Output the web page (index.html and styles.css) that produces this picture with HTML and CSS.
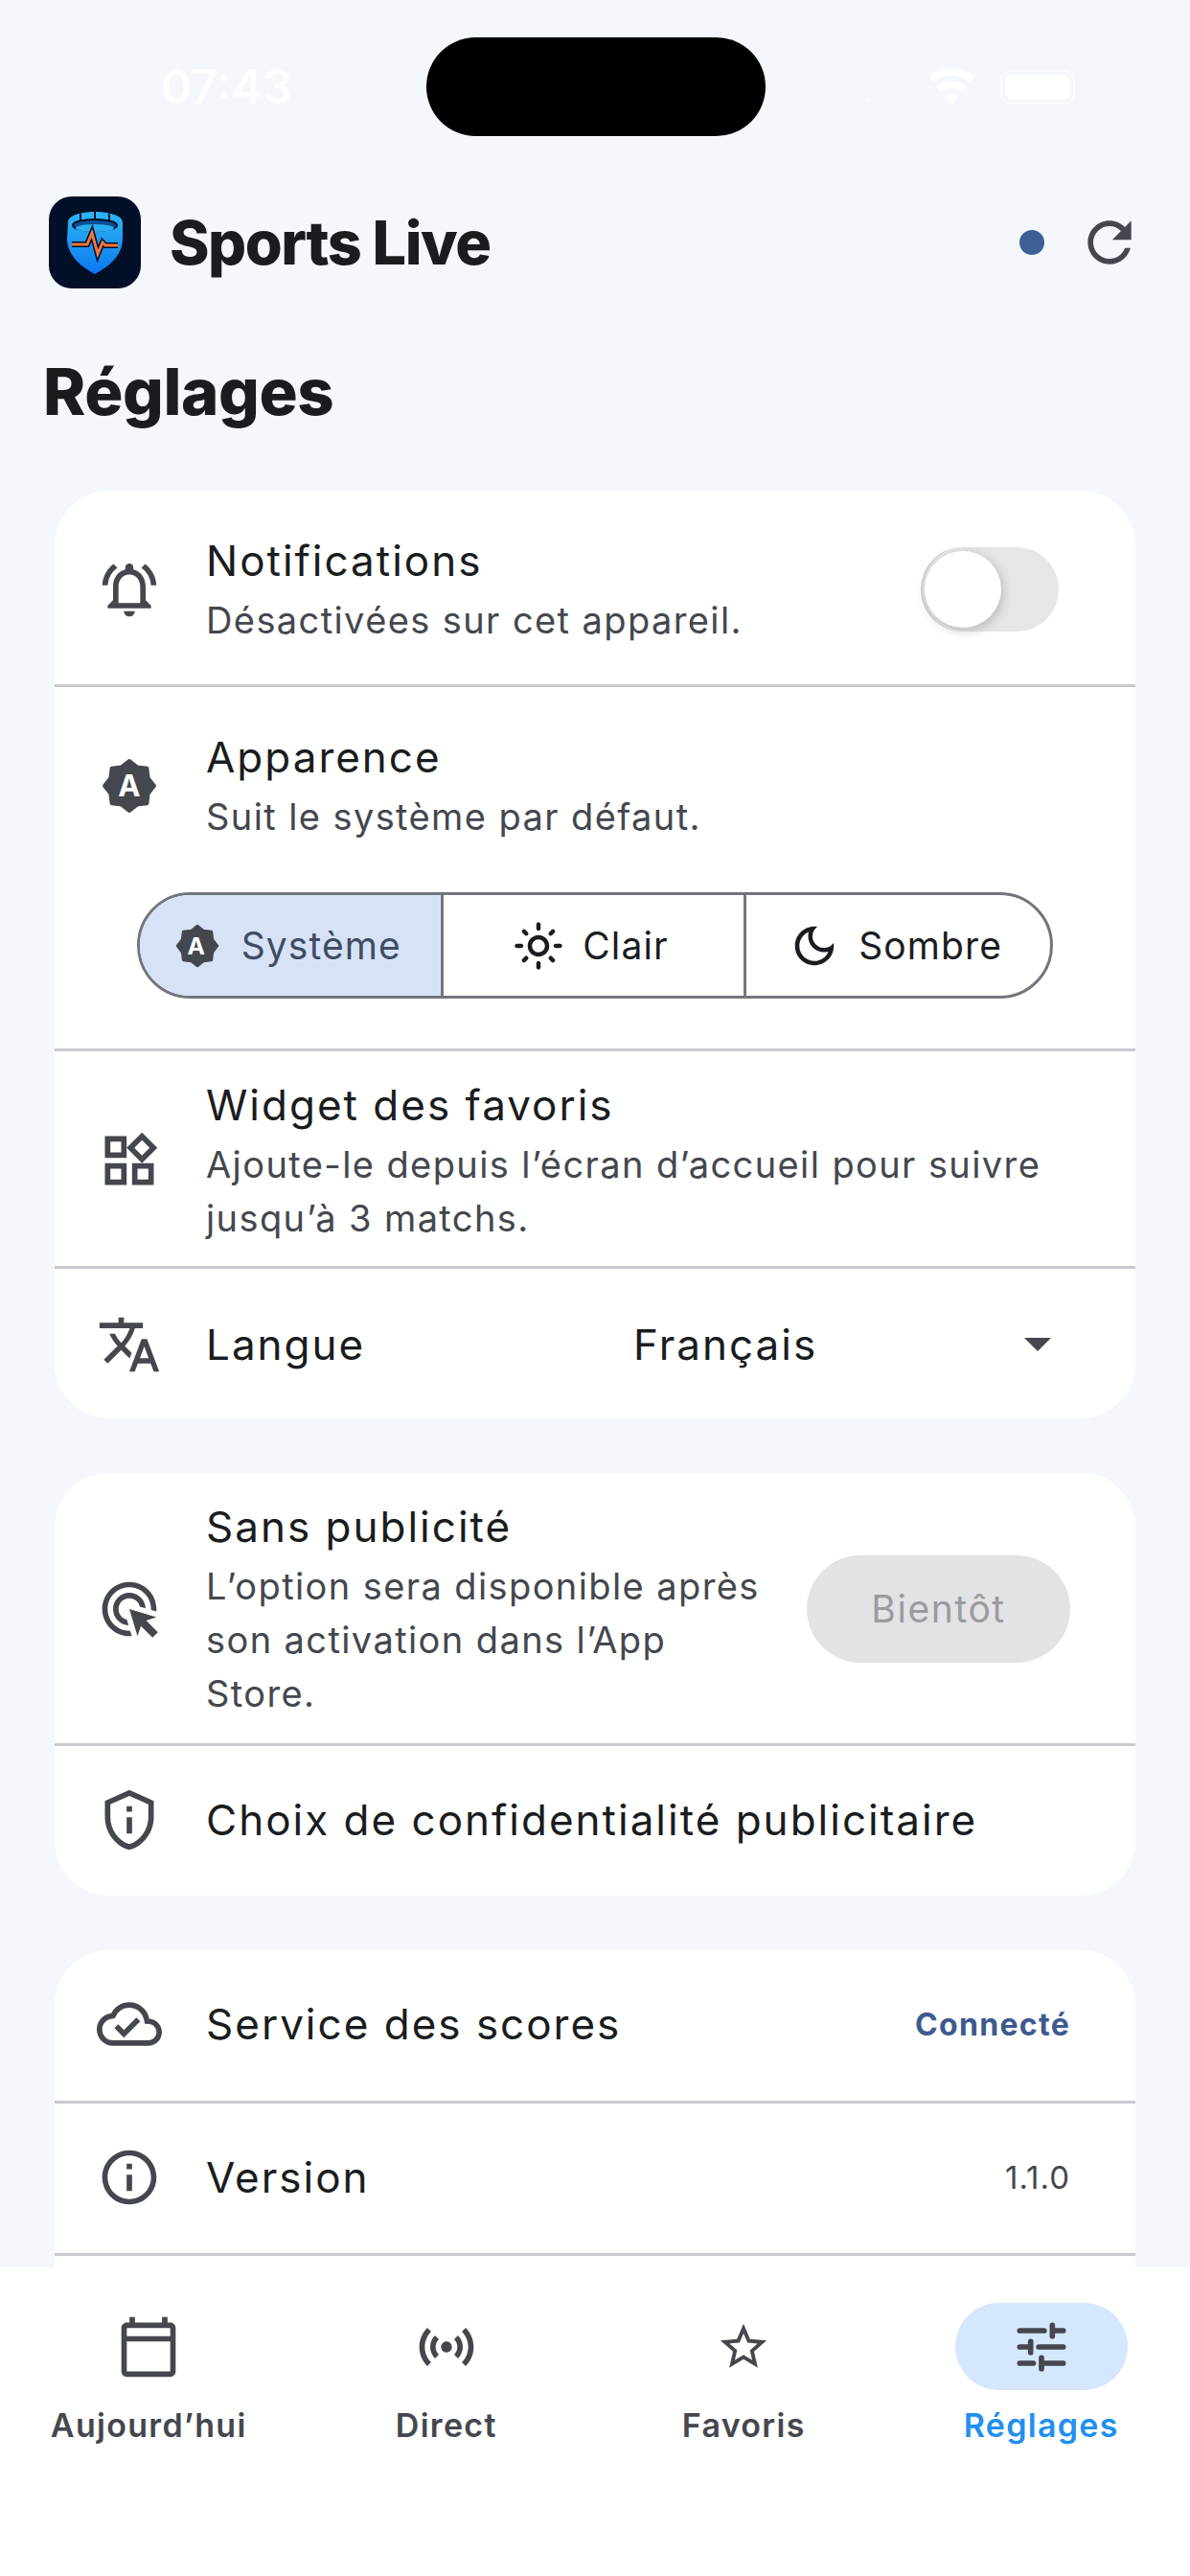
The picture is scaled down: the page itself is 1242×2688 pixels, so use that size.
FILE: index.html
```html
<!DOCTYPE html>
<html lang="fr">
<head>
	<meta charset="UTF-8">
	<meta name="viewport" content="width=device-width, initial-scale=1.0">
	<title>Sports Live - Réglages</title>
	<link rel="stylesheet" href="styles.css">
</head>
<body>
	<div class="status-bar">
		<div class="status-time">07:43</div>
		<div class="island"></div>
		<div class="status-icons">
			<svg class="signal" viewBox="0 0 60 8"><circle cx="4" cy="4" r="3"/><circle cx="21" cy="4" r="3"/><circle cx="38" cy="4" r="3"/><circle cx="55" cy="4" r="3"/></svg>
			<svg class="wifi" viewBox="0 0 24 18"><path d="M12 18 8.4 13.4a6 6 0 0 1 7.2 0zM6.6 11.2 4.6 8.6a12 12 0 0 1 14.8 0l-2 2.6a9 9 0 0 0-10.8 0zM2.8 6.4.6 3.6a18 18 0 0 1 22.8 0l-2.2 2.8a15 15 0 0 0-18.4 0z"/></svg>
			<div class="battery"><div class="battery-fill"></div></div>
		</div>
	</div>

	<header class="app-header">
		<svg class="logo" viewBox="0 0 96 96">
			<defs>
				<linearGradient id="shield" x1="0" y1="0" x2="0" y2="1">
					<stop offset="0" stop-color="#2fb6f2"/>
					<stop offset="1" stop-color="#0a78f0"/>
				</linearGradient>
			</defs>
			<rect width="96" height="96" rx="24" fill="#020f28"/>
			<path d="M20 27C20 20 33 16 48 16s29 4 29 11v17c0 16-12 28-29 37-17-9-29-21-29-37z" fill="url(#shield)"/>
			<path d="M33 18v9M48 16v9M63 18v9" stroke="#020f28" stroke-width="2"/>
			<ellipse cx="48" cy="30" rx="23" ry="6" fill="#0a4f96" stroke="#020f28" stroke-width="2"/>
			<ellipse cx="48" cy="33" rx="20" ry="4" fill="#2aaef0"/>
			<path d="M24 50h16l5-12 6 22 5-12 3 3h13" fill="none" stroke="#020f28" stroke-width="6"/>
			<path d="M24 50h16l5-12 6 22 5-12 3 3h13" fill="none" stroke="#f0763a" stroke-width="3"/>
		</svg>
		<div class="app-name">Sports Live</div>
		<div class="header-dot"></div>
		<svg class="icon" viewBox="0 0 24 24"><path d="M17.65 6.35C16.2 4.9 14.21 4 12 4c-4.42 0-7.99 3.58-7.99 8s3.57 8 7.99 8c3.73 0 6.84-2.55 7.73-6h-2.08c-.82 2.33-3.04 4-5.65 4-3.31 0-6-2.69-6-6s2.69-6 6-6c1.66 0 3.14.69 4.22 1.78L13 11h7V4l-2.35 2.35z"/></svg>
	</header>

	<main class="content">
		<h1 class="page-title">Réglages</h1>

		<section class="card">
			<div class="row row-tall">
				<svg class="icon" viewBox="0 0 24 24"><path d="M12 22c1.1 0 2-.9 2-2h-4c0 1.1.9 2 2 2zm6-6v-5c0-3.07-1.63-5.64-4.5-6.32V4c0-.83-.67-1.5-1.5-1.5s-1.5.67-1.5 1.5v.68C7.64 5.36 6 7.92 6 11v5l-2 2v1h16v-1l-2-2zm-2 1H8v-6c0-2.48 1.51-4.5 4-4.5s4 2.02 4 4.5v6zM7.58 4.08 6.15 2.65C3.75 4.48 2.17 7.3 2.03 10.5h2a8.445 8.445 0 0 1 3.55-6.42zm12.39 6.42h2c-.15-3.2-1.73-6.02-4.12-7.85l-1.42 1.43a8.495 8.495 0 0 1 3.54 6.42z"/></svg>
				<div class="row-text">
					<div class="row-title">Notifications</div>
					<div class="row-sub">Désactivées sur cet appareil.</div>
				</div>
				<div class="toggle"><div class="toggle-thumb"></div></div>
			</div>

			<div class="row-stack">
				<div class="row row-plain">
					<svg class="icon" viewBox="0 0 24 24"><polygon class="badge" points="12,2.7 14.91,4.98 18.58,5.42 19.02,9.09 21.3,12 19.02,14.91 18.58,18.58 14.91,19.02 12,21.3 9.09,19.02 5.42,18.58 4.98,14.91 2.7,12 4.98,9.09 5.42,5.42 9.09,4.98"/><text class="badge-letter" x="12" y="15.9">A</text></svg>
					<div class="row-text">
						<div class="row-title">Apparence</div>
						<div class="row-sub">Suit le système par défaut.</div>
					</div>
				</div>
				<div class="segments">
					<div class="segment segment-on">
						<svg class="seg-icon seg-auto" viewBox="0 0 24 24"><polygon class="badge" points="12,2.7 14.91,4.98 18.58,5.42 19.02,9.09 21.3,12 19.02,14.91 18.58,18.58 14.91,19.02 12,21.3 9.09,19.02 5.42,18.58 4.98,14.91 2.7,12 4.98,9.09 5.42,5.42 9.09,4.98"/><text class="badge-letter" x="12" y="15.9">A</text></svg>
						<span>Système</span>
					</div>
					<div class="segment">
						<svg class="seg-icon" viewBox="0 0 24 24"><path d="M12 9c1.65 0 3 1.35 3 3s-1.35 3-3 3-3-1.35-3-3 1.35-3 3-3m0-2c-2.76 0-5 2.24-5 5s2.24 5 5 5 5-2.24 5-5-2.24-5-5-5zM2 13h2c.55 0 1-.45 1-1s-.45-1-1-1H2c-.55 0-1 .45-1 1s.45 1 1 1zm18 0h2c.55 0 1-.45 1-1s-.45-1-1-1h-2c-.55 0-1 .45-1 1s.45 1 1 1zM11 2v2c0 .55.45 1 1 1s1-.45 1-1V2c0-.55-.45-1-1-1s-1 .45-1 1zm0 18v2c0 .55.45 1 1 1s1-.45 1-1v-2c0-.55-.45-1-1-1s-1 .45-1 1zM5.99 4.58a.996.996 0 0 0-1.41 0 .996.996 0 0 0 0 1.41l1.06 1.06c.39.39 1.03.39 1.41 0s.39-1.03 0-1.41L5.99 4.58zm12.37 12.37a.996.996 0 0 0-1.41 0 .996.996 0 0 0 0 1.41l1.06 1.06c.39.39 1.03.39 1.41 0a.996.996 0 0 0 0-1.41l-1.06-1.06zm1.06-10.96a.996.996 0 0 0 0-1.41.996.996 0 0 0-1.41 0l-1.06 1.06c-.39.39-.39 1.03 0 1.41s1.03.39 1.41 0l1.06-1.06zM7.05 18.36a.996.996 0 0 0 0-1.41.996.996 0 0 0-1.41 0l-1.06 1.06c-.39.39-.39 1.03 0 1.41s1.03.39 1.41 0l1.06-1.06z"/></svg>
						<span>Clair</span>
					</div>
					<div class="segment">
						<svg class="seg-icon" viewBox="0 0 24 24"><path d="M9.37 5.51c-.18.64-.27 1.31-.27 1.99 0 4.08 3.32 7.4 7.4 7.4.68 0 1.35-.09 1.99-.27C17.45 17.19 14.93 19 12 19c-3.86 0-7-3.14-7-7 0-2.93 1.81-5.45 4.37-6.49zM12 3c-4.97 0-9 4.03-9 9s4.03 9 9 9 9-4.03 9-9c0-.46-.04-.92-.1-1.36-.98 1.37-2.58 2.26-4.4 2.26-2.98 0-5.4-2.42-5.4-5.4 0-1.81.89-3.42 2.26-4.4-.44-.06-.9-.1-1.36-.1z"/></svg>
						<span>Sombre</span>
					</div>
				</div>
			</div>

			<div class="row">
				<svg class="icon" viewBox="0 0 24 24"><path d="M16.66 4.52l2.83 2.83-2.83 2.83-2.83-2.83 2.83-2.83M9 5v4H5V5h4m10 10v4h-4v-4h4M9 15v4H5v-4h4m7.66-13.31L11 7.34 16.66 13l5.66-5.66-5.66-5.65zM11 3H3v8h8V3zm10 10h-8v8h8v-8zm-10 0H3v8h8v-8z"/></svg>
				<div class="row-text">
					<div class="row-title">Widget des favoris</div>
					<div class="row-sub">Ajoute-le depuis l’écran d’accueil pour suivre jusqu’à 3 matchs.</div>
				</div>
			</div>

			<div class="row row-single row-lang">
				<svg class="icon" viewBox="0 0 24 24"><path d="M12.87 15.07l-2.54-2.51.03-.03c1.74-1.94 2.98-4.17 3.71-6.53H17V4h-7V2H8v2H1v1.99h11.17C11.5 7.92 10.44 9.75 9 11.35 8.07 10.32 7.3 9.19 6.69 8h-2c.73 1.63 1.73 3.17 2.98 4.56l-5.09 5.02L4 19l5-5 3.11 3.11.76-2.04zM18.5 10h-2L12 22h2l1.12-3h4.75L21 22h2l-4.5-12zm-2.62 7l1.62-4.33L19.12 17h-3.24z"/></svg>
				<div class="row-title lang-label">Langue</div>
				<div class="row-title lang-value">Français</div>
				<div class="lang-arrow"></div>
			</div>
		</section>

		<section class="card">
			<div class="row row-ads">
				<svg class="icon" viewBox="0 0 24 24"><path d="M11.71 17.99C8.53 17.84 6 15.22 6 12c0-3.31 2.69-6 6-6 3.22 0 5.84 2.53 5.99 5.71l-2.1-.63C15.48 9.31 13.89 8 12 8c-2.21 0-4 1.79-4 4 0 1.89 1.31 3.48 3.08 3.89l.63 2.1zM22 12c0 .3-.01.6-.04.9l-1.97-.59c.01-.1.01-.21.01-.31 0-4.42-3.58-8-8-8s-8 3.58-8 8 3.58 8 8 8c.1 0 .21 0 .31-.01l.59 1.97c-.3.03-.6.04-.9.04-5.52 0-10-4.48-10-10S6.48 2 12 2s10 4.48 10 10zm-3.77 4.26L22 15l-10-3 3 10 1.26-3.77 4.27 4.27 1.98-1.98-4.28-4.26z"/></svg>
				<div class="row-text">
					<div class="row-title">Sans publicité</div>
					<div class="row-sub">L’option sera disponible après son activation dans l’App Store.</div>
				</div>
				<div class="soon-btn">Bientôt</div>
			</div>
			<div class="row row-single">
				<svg class="icon" viewBox="0 0 24 24"><path d="M12 3.19l7 3.11V11c0 4.52-2.98 8.69-7 9.93-4.02-1.24-7-5.41-7-9.93V6.3l7-3.11M12 1L3 5v6c0 5.55 3.84 10.74 9 12 5.16-1.26 9-6.45 9-12V5l-9-4zm-1 6h2v2h-2zm0 4h2v6h-2z"/></svg>
				<div class="row-title">Choix de confidentialité publicitaire</div>
			</div>
		</section>

		<section class="card">
			<div class="row row-single">
				<svg class="icon" viewBox="0 0 24 24"><path d="M19.35 10.04C18.67 6.59 15.64 4 12 4 9.11 4 6.6 5.64 5.35 8.04 2.34 8.36 0 10.91 0 14c0 3.31 2.69 6 6 6h13c2.76 0 5-2.24 5-5 0-2.64-2.05-4.78-4.65-4.96zM19 18H6c-2.21 0-4-1.79-4-4 0-2.05 1.53-3.76 3.56-3.97l1.07-.11.5-.95C8.08 7.14 9.94 6 12 6c2.62 0 4.88 1.86 5.39 4.43l.3 1.5 1.53.11c1.56.1 2.78 1.41 2.78 2.96 0 1.65-1.35 3-3 3zm-9-3.82l-2.09-2.09L6.5 13.5 10 17l6.01-6.01-1.41-1.41z"/></svg>
				<div class="row-title row-grow">Service des scores</div>
				<div class="row-state">Connecté</div>
			</div>
			<div class="row row-single">
				<svg class="icon" viewBox="0 0 24 24"><path d="M11 7h2v2h-2zm0 4h2v6h-2zm1-9C6.48 2 2 6.48 2 12s4.48 10 10 10 10-4.48 10-10S17.52 2 12 2zm0 18c-4.41 0-8-3.59-8-8s3.59-8 8-8 8 3.59 8 8-3.59 8-8 8z"/></svg>
				<div class="row-title row-grow">Version</div>
				<div class="row-version">1.1.0</div>
			</div>
			<div class="row row-single"></div>
		</section>
	</main>

	<nav class="tabs">
		<div class="tab">
			<div class="tab-pill">
				<svg class="icon" viewBox="0 0 24 24"><path d="M20 3h-1V1h-2v2H7V1H5v2H4c-1.1 0-2 .9-2 2v16c0 1.1.9 2 2 2h16c1.1 0 2-.9 2-2V5c0-1.1-.9-2-2-2zm0 18H4V10h16v11zm0-13H4V5h16v3z"/></svg>
			</div>
			<div class="tab-label">Aujourd’hui</div>
		</div>
		<div class="tab">
			<div class="tab-pill">
				<svg class="icon" viewBox="0 0 24 24"><path d="M7.76 16.24C6.67 15.16 6 13.66 6 12s.67-3.16 1.76-4.24l1.42 1.42C8.45 9.9 8 10.9 8 12c0 1.1.45 2.1 1.17 2.83l-1.41 1.41zm8.48 0C17.33 15.16 18 13.66 18 12s-.67-3.16-1.76-4.24l-1.42 1.42C15.55 9.9 16 10.9 16 12c0 1.1-.45 2.1-1.17 2.83l1.41 1.41zM12 10c-1.1 0-2 .9-2 2s.9 2 2 2 2-.9 2-2-.9-2-2-2zm8 2c0 2.21-.9 4.21-2.35 5.65l1.42 1.42C20.88 17.26 22 14.76 22 12s-1.12-5.26-2.93-7.07l-1.42 1.42C19.1 7.79 20 9.79 20 12zM6.35 6.35 4.93 4.93C3.12 6.74 2 9.24 2 12s1.12 5.26 2.93 7.07l1.42-1.42C4.9 16.21 4 14.21 4 12s.9-4.21 2.35-5.65z"/></svg>
			</div>
			<div class="tab-label">Direct</div>
		</div>
		<div class="tab">
			<div class="tab-pill">
				<svg class="star-icon" viewBox="0 0 24 24"><path d="M22 9.24l-7.19-.62L12 2 9.19 8.63 2 9.24l5.46 4.73L5.82 21 12 17.27 18.18 21l-1.63-7.03L22 9.24zM12 15.4l-3.76 2.27 1-4.28-3.32-2.88 4.38-.38L12 6.1l1.71 4.04 4.38.38-3.32 2.88 1 4.28L12 15.4z"/></svg>
			</div>
			<div class="tab-label">Favoris</div>
		</div>
		<div class="tab tab-on">
			<div class="tab-pill">
				<svg class="icon icon-tune" viewBox="0 0 24 24"><path d="M4 6h9M16 4v4M16 6h4M4 12h4M8 10v4M11 12h9M4 18h5M12 16v4M12 18h8"/></svg>
			</div>
			<div class="tab-label">Réglages</div>
		</div>
	</nav>
</body>
</html>
```
FILE: styles.css
```css
* {
	margin: 0;
	box-sizing: border-box;
}
body {
	display: flex;
	flex-direction: column;
	height: 2688px;
	overflow: hidden;
	font-family: "Inter", "Liberation Sans", sans-serif;
	color: #1a1c20;
	background-color: #f4f7fc;
}

/* status bar */
.status-bar {
	display: flex;
	flex-shrink: 0;
	height: 142px;
	padding-top: 39px;
}
.status-time {
	width: 445px;
	padding: 22px 0 0 168px;
	font-size: 49px;
	line-height: 60px;
	font-weight: 600;
	color: #ffffff;
	opacity: 0.85;
}
.island {
	width: 354px;
	height: 103px;
	border-radius: 52px;
	background-color: #000;
}
.status-icons {
	display: flex;
	align-items: center;
	height: 103px;
	margin-left: 86px;
}
.signal {
	width: 60px;
	height: 8px;
	margin: 26px 21px 0 0;
	fill: #fff;
	opacity: 0.35;
}
.wifi {
	width: 54px;
	height: 38px;
	margin-right: 24px;
	fill: #fff;
}
.battery {
	width: 78px;
	height: 36px;
	padding: 3px;
	border: 2px solid rgba(255, 255, 255, 0.5);
	border-radius: 11px;
}
.battery-fill {
	height: 100%;
	border-radius: 8px;
	background-color: #fff;
}

/* app header */
.app-header {
	display: flex;
	flex-shrink: 0;
	align-items: center;
	height: 96px;
	margin-top: 63px;
	padding: 0 50px 0 51px;
}
.logo {
	width: 96px;
	height: 96px;
	flex-shrink: 0;
}
.app-name {
	flex: 1 1 0%;
	margin-left: 30px;
	font-size: 63px;
	font-weight: 800;
	letter-spacing: -1.5px;
}
.header-dot {
	width: 26px;
	height: 26px;
	margin-right: 34px;
	border-radius: 50%;
	background-color: #3f6096;
}
.icon {
	width: 68px;
	height: 68px;
	flex-shrink: 0;
	fill: #44474e;
}

/* content */
.content {
	flex: 1 1 0%;
	min-height: 0;
	overflow: hidden;
	padding: 0 57px;
}
.page-title {
	margin: 68px 0 63px -12px;
	font-size: 67px;
	line-height: 80px;
	font-weight: 800;
	letter-spacing: -0.4px;
}
.card {
	margin-bottom: 57px;
	border-radius: 57px;
	background-color: #fff;
}
.row {
	display: flex;
	align-items: center;
	gap: 46px;
	padding: 26px 68px 22px 44px;
}
.row-tall {
	min-height: 202px;
}
.row-ads {
	padding-bottom: 24px;
}
.row-single {
	height: 159px;
	padding-top: 0;
	padding-bottom: 2px;
}
.row-single:first-child {
	height: 157px;
	padding-bottom: 3px;
}
.row-lang {
	padding-top: 2px;
	padding-bottom: 0;
}
.row-plain {
	padding-top: 43px;
	padding-bottom: 0;
}
.row + .row, .row + .row-stack, .row-stack + .row {
	border-top: 3px solid #c8c9cf;
}
.row-text {
	flex: 1 1 0%;
	min-width: 0;
}
.row-grow {
	flex: 1 1 0%;
}
.row-title {
	font-size: 44px;
	line-height: 60px;
	letter-spacing: 2px;
	white-space: nowrap;
}
.row-sub {
	margin-top: 4px;
	font-size: 38px;
	line-height: 56px;
	letter-spacing: 1.4px;
	color: #44474e;
}

/* toggle */
.toggle {
	width: 144px;
	height: 88px;
	flex-shrink: 0;
	margin-right: 12px;
	padding: 4px;
	border-radius: 44px;
	background-color: #e6e6e9;
	box-shadow: inset 3px 0 0 -1px #d3d3d6;
}
.toggle-thumb {
	width: 80px;
	height: 80px;
	border-radius: 50%;
	background-color: #fff;
	box-shadow: 2px 3px 12px rgba(0, 0, 0, 0.2);
}

/* appearance switch */
.badge {
	fill: #44474e;
	stroke: #44474e;
	stroke-width: 1.2;
	stroke-linejoin: round;
}
.badge-letter {
	font-family: "Inter", sans-serif;
	font-size: 11px;
	font-weight: 700;
	fill: #fff;
	text-anchor: middle;
}
.segments {
	display: grid;
	grid-template-columns: repeat(3, 1fr);
	height: 111px;
	margin: 51px 86px 52px;
	overflow: hidden;
	border: 3px solid #74757c;
	border-radius: 56px;
}
.segment {
	display: flex;
	align-items: center;
	justify-content: center;
	gap: 19px;
	padding-right: 6px;
	font-size: 39px;
	letter-spacing: 1.1px;
	color: #1a1c20;
	border-right: 3px solid #74757c;
}
.segment:last-child {
	border-right: none;
}
.segment-on {
	padding-right: 8px;
	background-color: #d6e3f7;
	color: #3f4c62;
}
.seg-icon {
	width: 54px;
	height: 54px;
	flex-shrink: 0;
	fill: #1a1c20;
}
.seg-auto {
	fill: #44474e;
}

/* language */
.lang-label {
	width: 400px;
}
.lang-value {
	flex: 1 1 0%;
}
.lang-arrow {
	width: 0;
	height: 0;
	margin-right: 20px;
	border-top: 14px solid #44474e;
	border-left: 14px solid transparent;
	border-right: 14px solid transparent;
}

/* right side values */
.soon-btn {
	flex-shrink: 0;
	width: 275px;
	height: 112px;
	margin-left: -18px;
	border-radius: 56px;
	font-size: 39px;
	line-height: 112px;
	text-align: center;
	letter-spacing: 1.6px;
	color: #9a9b9e;
	background-color: #e2e3e5;
}
.row-state {
	font-size: 32px;
	font-weight: 700;
	letter-spacing: 1.3px;
	color: #3d5a8f;
}
.row-version {
	font-size: 33px;
	letter-spacing: 1px;
	color: #44474e;
}

/* bottom tabs */
.tabs {
	display: grid;
	grid-template-columns: repeat(4, 1fr);
	flex-shrink: 0;
	height: 322px;
	padding-top: 37px;
	background-color: #fff;
}
.tab {
	display: flex;
	flex-direction: column;
	align-items: center;
}
.tab-pill {
	display: flex;
	align-items: center;
	justify-content: center;
	width: 180px;
	height: 91px;
	border-radius: 46px;
}
.tab-on .tab-pill {
	background-color: #d5e7fd;
}
.star-icon {
	width: 58px;
	height: 58px;
	fill: #44474e;
}
.icon-tune {
	fill: none;
	stroke: #44474e;
	stroke-width: 2;
	stroke-linecap: round;
}
.tab-label {
	margin-top: 15px;
	font-size: 34px;
	line-height: 44px;
	font-weight: 600;
	letter-spacing: 1.3px;
	color: #44474e;
}
.tab-on .tab-label {
	color: #2190f0;
}
```
